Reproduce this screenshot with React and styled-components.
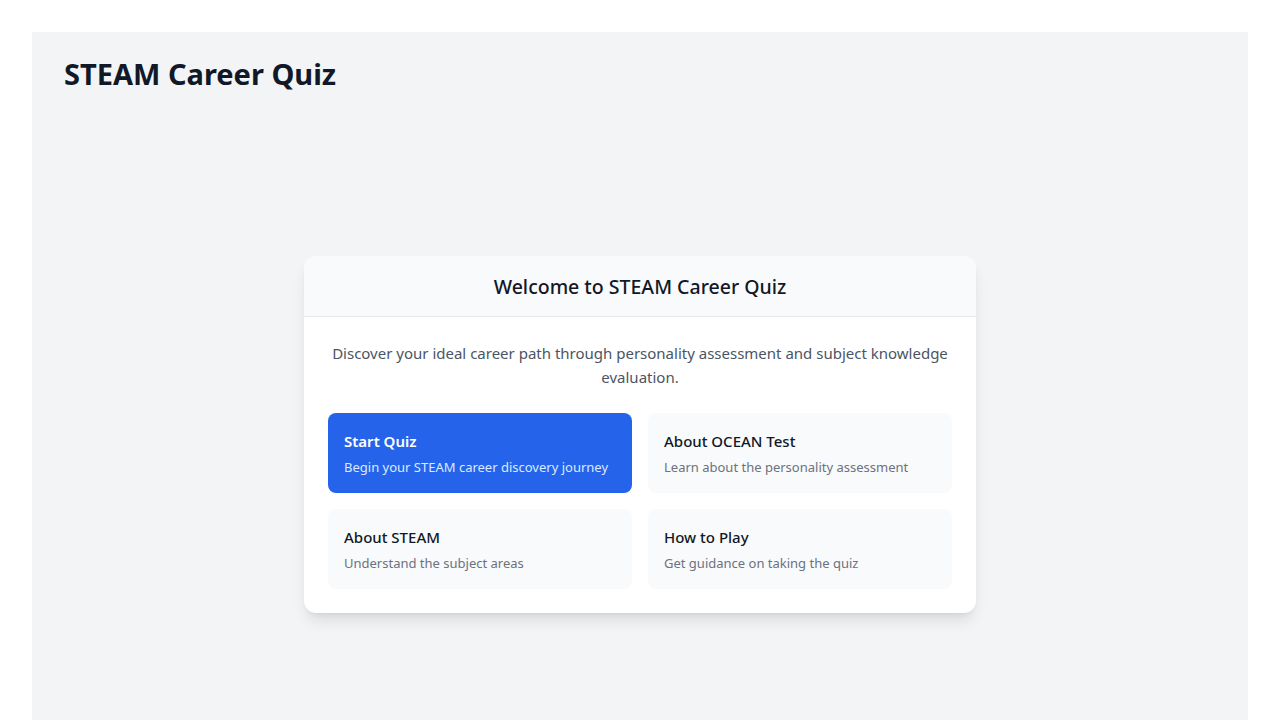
import React from 'react'
import styled, { createGlobalStyle } from 'styled-components'

const GlobalStyle = createGlobalStyle`
  body {
    margin: 0;
    background: #ffffff;
    font-family: "Noto Sans", "Open Sans", Arial, sans-serif;
  }
  * { box-sizing: border-box; }
`

const Page = styled.div`
  padding: 32px 32px 0;
`

const Panel = styled.main`
  background: #f3f4f6;
  padding: 22px 32px 120px;
  min-height: 720px;
`

const Title = styled.h1`
  margin: 0;
  font-size: 29px;
  line-height: 40px;
  font-weight: 700;
  color: #111827;
`

const Center = styled.div`
  display: flex;
  justify-content: center;
  padding-top: 162px;
`

const Card = styled.section`
  width: 672px;
  background: #ffffff;
  border-radius: 12px;
  box-shadow: 0 10px 15px -3px rgba(0, 0, 0, 0.1), 0 4px 6px -4px rgba(0, 0, 0, 0.1);
  overflow: hidden;
`

const CardHeader = styled.header`
  height: 61px;
  display: flex;
  align-items: center;
  justify-content: center;
  padding-top: 1px;
  background: #f9fafb;
  border-bottom: 1px solid #e5e7eb;
`

const CardTitle = styled.h2`
  margin: 0;
  font-size: 19.5px;
  font-weight: 500;
  color: #111827;
`

const CardBody = styled.div`
  padding: 24px;
`

const Intro = styled.p`
  margin: 0 0 24px;
  text-align: center;
  font-size: 15px;
  line-height: 24px;
  color: #4b5563;
`

const Grid = styled.div`
  display: grid;
  grid-template-columns: 1fr 1fr;
  gap: 16px;
`

const Tile = styled.button`
  display: flex;
  flex-direction: column;
  align-items: flex-start;
  gap: 4px;
  height: 80px;
  padding: 16px;
  border: none;
  border-radius: 8px;
  text-align: left;
  font-family: inherit;
  cursor: pointer;
  background: ${p => (p.$primary ? '#2563eb' : '#f9fafb')};
`

const TileTitle = styled.span`
  font-size: 15px;
  line-height: 24px;
  font-weight: ${p => (p.$primary ? 600 : 500)};
  color: ${p => (p.$primary ? '#ffffff' : '#111827')};
`

const TileText = styled.span`
  font-size: 13px;
  line-height: 20px;
  color: ${p => (p.$primary ? '#dbeafe' : '#6b7280')};
`

const options = [
  { title: 'Start Quiz', text: 'Begin your STEAM career discovery journey', primary: true },
  { title: 'About OCEAN Test', text: 'Learn about the personality assessment' },
  { title: 'About STEAM', text: 'Understand the subject areas' },
  { title: 'How to Play', text: 'Get guidance on taking the quiz' },
]

export default function App() {
  return (
    <>
      <GlobalStyle />
      <Page>
        <Panel>
          <Title>STEAM Career Quiz</Title>
          <Center>
            <Card>
              <CardHeader>
                <CardTitle>Welcome to STEAM Career Quiz</CardTitle>
              </CardHeader>
              <CardBody>
                <Intro>
                  Discover your ideal career path through personality assessment and subject knowledge evaluation.
                </Intro>
                <Grid>
                  {options.map(o => (
                    <Tile key={o.title} $primary={o.primary}>
                      <TileTitle $primary={o.primary}>{o.title}</TileTitle>
                      <TileText $primary={o.primary}>{o.text}</TileText>
                    </Tile>
                  ))}
                </Grid>
              </CardBody>
            </Card>
          </Center>
        </Panel>
      </Page>
    </>
  )
}
